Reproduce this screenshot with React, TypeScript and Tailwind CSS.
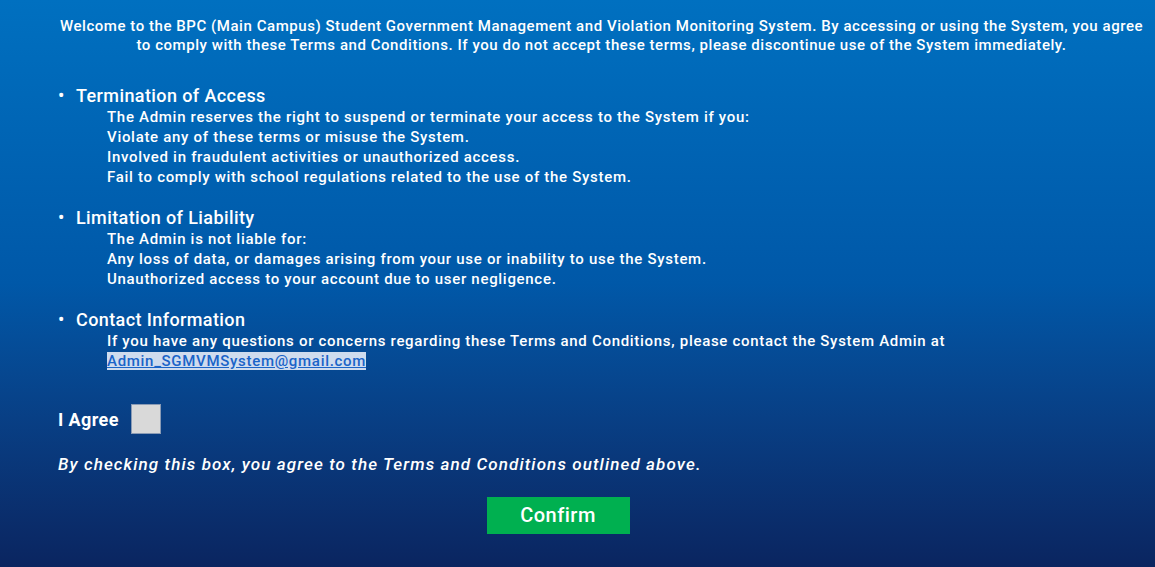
import { useState } from "react"

const sections = [
  {
    title: "Termination of Access",
    lines: [
      "The Admin reserves the right to suspend or terminate your access to the System if you:",
      "Violate any of these terms or misuse the System.",
      "Involved in fraudulent activities or unauthorized access.",
      "Fail to comply with school regulations related to the use of the System.",
    ],
  },
  {
    title: "Limitation of Liability",
    lines: [
      "The Admin is not liable for:",
      "Any loss of data, or damages arising from your use or inability to use the System.",
      "Unauthorized access to your account due to user negligence.",
    ],
  },
]

export default function App() {
  const [agreed, setAgreed] = useState(false)

  return (
    <div
      className="min-h-[567px] w-full bg-gradient-to-b from-[#0070c0] via-[#0058a8] to-[#0a2560] text-white"
      style={{ fontFamily: 'Roboto, "DejaVu Sans", sans-serif' }}
    >
      {/* Intro */}
      <div className="pl-[58px] pr-[10px] pt-[17px] text-center text-[15px] font-medium leading-[19px] tracking-[0.55px]">
        <p>
          Welcome to the BPC (Main Campus) Student Government Management and Violation Monitoring System. By accessing
          or using the System, you agree
          <br />
          to comply with these Terms and Conditions. If you do not accept these terms, please discontinue use of the
          System immediately.
        </p>
      </div>

      {/* Sections */}
      <ul className="mt-[30px] pl-[58px]">
        {sections.map((s) => (
          <li key={s.title} className="mb-[20px]">
            <div className="flex items-center text-[18px] font-medium leading-[22px] tracking-[0.4px]">
              <span className="w-[18px]">•</span>
              <span>{s.title}</span>
            </div>
            <div className="pl-[49px] text-[15px] font-medium leading-[20px] tracking-[0.7px]">
              {s.lines.map((l) => (
                <div key={l}>{l}</div>
              ))}
            </div>
          </li>
        ))}
        <li>
          <div className="flex items-center text-[18px] font-medium leading-[22px] tracking-[0.4px]">
            <span className="w-[18px]">•</span>
            <span>Contact Information</span>
          </div>
          <div className="pl-[49px] text-[15px] font-medium leading-[20px] tracking-[0.7px]">
            <div>
              If you have any questions or concerns regarding these Terms and Conditions, please contact the System
              Admin at
            </div>
            <a href="#" className="bg-[#cfdcee] text-[#1a64c8] underline">
              Admin_SGMVMSystem@gmail.com
            </a>
          </div>
        </li>
      </ul>

      {/* Agreement */}
      <div className="mt-[33px] flex items-center pl-[58px]">
        <span className="text-[18px] font-bold tracking-[0.4px]">I Agree</span>
        <button
          onClick={() => setAgreed(!agreed)}
          className="ml-[12px] flex h-[30px] w-[30px] items-center justify-center border border-[#8a9bb5] bg-[#d9d9d9] text-[#0a2560]"
          aria-label="I Agree"
        >
          {agreed ? "✓" : ""}
        </button>
      </div>
      <p className="mt-[18px] pl-[58px] text-[17px] font-medium italic tracking-[1.1px]">
        By checking this box, you agree to the Terms and Conditions outlined above.
      </p>

      <div className="flex justify-center pb-[32px] pt-[19px]">
        <button className="ml-[-39px] h-[37px] w-[143px] bg-[#00b050] text-[20px] font-medium tracking-[0.5px] text-white">
          Confirm
        </button>
      </div>
    </div>
  )
}
